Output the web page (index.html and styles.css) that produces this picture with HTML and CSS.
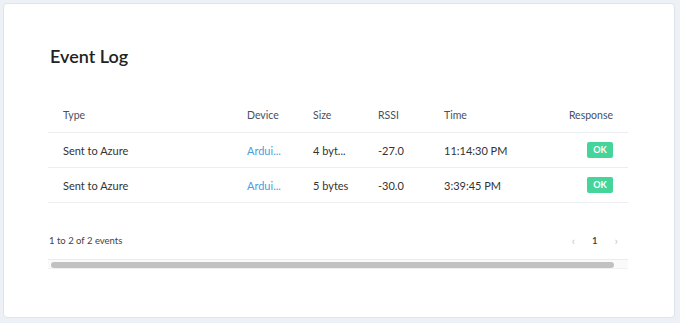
FILE: index.html
```html
<!DOCTYPE html>
<html>
<head>
<meta charset="utf-8">
<link rel="stylesheet" href="styles.css">
</head>
<body>
<div class="card">
  <h1 class="title">Event Log</h1>
  <table class="log">
    <colgroup>
      <col class="c-type"><col class="c-dev"><col class="c-size"><col class="c-rssi"><col class="c-time"><col class="c-resp">
    </colgroup>
    <thead>
      <tr><th>Type</th><th>Device</th><th>Size</th><th>RSSI</th><th>Time</th><th class="right">Response</th></tr>
    </thead>
    <tbody>
      <tr><td>Sent to Azure</td><td class="link">Ardui...</td><td>4 byt...</td><td>-27.0</td><td>11:14:30 PM</td><td class="right"><span class="ok">OK</span></td></tr>
      <tr><td>Sent to Azure</td><td class="link">Ardui...</td><td>5 bytes</td><td>-30.0</td><td>3:39:45 PM</td><td class="right"><span class="ok">OK</span></td></tr>
    </tbody>
  </table>
  <div class="footer">
    <span class="count">1 to 2 of 2 events</span>
    <div class="pager"><span class="arrow">&#8249;</span><span class="page">1</span><span class="arrow">&#8250;</span></div>
  </div>
  <div class="scroll"><div class="thumb"></div></div>
</div>
</body>
</html>
```
FILE: styles.css
```css
html, body { margin: 0; padding: 0; }
body {
  background: #edf1f5;
  font-family: Lato, "Noto Sans", sans-serif;
  width: 680px;
  height: 323px;
  overflow: hidden;
}
.card {
  margin: 3px 0 0 3px;
  width: 672px;
  height: 315px;
  background: #fff;
  border: 1px solid #dde4ec;
  border-radius: 4px;
  padding: 0 0 0 44px;
  box-sizing: border-box;
}
.title {
  margin: 0;
  padding-top: 40px;
  font-size: 18px;
  font-weight: 600;
  color: #222;
  line-height: 24px;
  padding-left: 2px;
}
.log {
  margin-top: 30px;
  width: 580px;
  border-collapse: collapse;
  table-layout: fixed;
  font-size: 11px;
}
.c-type { width: 184px; }
.c-dev { width: 66px; }
.c-size { width: 65px; }
.c-rssi { width: 66px; }
.c-time { width: 127px; }
.c-resp { width: 72px; }
.log th, .log td {
  padding: 0 15px;
  height: 34px;
  text-align: left;
  white-space: nowrap;
  border-bottom: 1px solid #eceff2;
}
.log th { font-weight: 400; color: #4a4f5c; font-size: 10.5px; }
.log td { color: #333; }
.log .right { text-align: right; padding-left: 0; }
.log td.link { color: #4a9de0; }
.ok {
  display: inline-block;
  background: #45d49a;
  color: #fff;
  font-size: 9px;
  font-weight: 700;
  width: 26px;
  height: 16px;
  line-height: 16px;
  text-align: center;
  border-radius: 2px;
}
.footer {
  width: 580px;
  display: flex;
  justify-content: space-between;
  align-items: center;
  margin-top: 29px;
  height: 16px;
  font-size: 9.5px;
  color: #444;
}
.count { padding-left: 1px; }
.pager { display: flex; align-items: center; gap: 17px; padding-right: 10px; }
.arrow { color: #c8c8c8; font-size: 12px; }
.page { color: #333; font-weight: 600; font-size: 9.5px; }
.scroll {
  margin-top: 11px;
  width: 580px;
  height: 10px;
  background: #fafafa;
  border-top: 1px solid #ececec;
  border-bottom: 1px solid #f1f1f1;
  box-sizing: border-box;
  padding: 2px 14px 0 3px;
}
.thumb {
  height: 6px;
  background: #c1c1c1;
  border-radius: 3px;
}
```
